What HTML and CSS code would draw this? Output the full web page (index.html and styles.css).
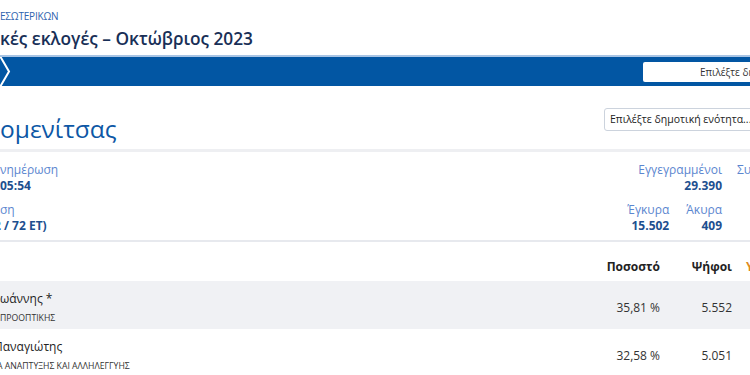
FILE: index.html
```html
<!DOCTYPE html>
<html lang="el">
<head>
<meta charset="utf-8">
<title>Εκλογές</title>
<link rel="stylesheet" href="styles.css">
</head>
<body>
<div class="page">
  <header class="site-head">
    <div class="ministry">ΕΣΩΤΕΡΙΚΩΝ</div>
    <h1 class="title">κές εκλογές – Οκτώβριος 2023</h1>
  </header>
  <nav class="navbar">
    <svg class="chev" width="14" height="30" viewBox="0 0 14 30"><path d="M1 -1 L10 14.5 L1 30" fill="none" stroke="#fff" stroke-width="2"/></svg>
    <div class="nav-select">Επιλέξτε δήμο</div>
  </nav>
  <section class="muni">
    <h2 class="muni-name">ομενίτσας</h2>
    <div class="unit-select">Επιλέξτε δημοτική ενότητα...</div>
  </section>
  <section class="stats">
    <div class="stats-left">
      <div class="stat"><div class="lbl">νημέρωση</div><div class="val">05:54</div></div>
      <div class="stat"><div class="lbl">ση</div><div class="val"><span class="cut">2</span> / 72 ΕΤ)</div></div>
    </div>
    <div class="stats-right">
      <div class="srow">
        <div class="stat r"><div class="lbl">Εγγεγραμμένοι</div><div class="val">29.390</div></div>
        <div class="stat l"><div class="lbl">Συμμετοχή</div><div class="val">&nbsp;</div></div>
      </div>
      <div class="srow">
        <div class="stat r"><div class="lbl">Έγκυρα</div><div class="val">15.502</div></div>
        <div class="stat r"><div class="lbl">Άκυρα</div><div class="val">409</div></div>
        <div class="stat l"></div>
      </div>
    </div>
  </section>
  <section class="results">
    <div class="row head">
      <div></div>
      <div class="num">Ποσοστό</div>
      <div class="num">Ψήφοι</div>
      <div class="extra">Υποψήφιοι</div>
    </div>
    <div class="row alt">
      <div class="cand"><div class="name">ωάννης *</div><div class="party">ΠΡΟΟΠΤΙΚΗΣ</div></div>
      <div class="num reg">35,81 %</div>
      <div class="num reg">5.552</div>
      <div class="extra"></div>
    </div>
    <div class="row">
      <div class="cand"><div class="name"><span class="cut2">Π</span>αναγιώτης</div><div class="party"><span class="cut3">Α</span> ΑΝΑΠΤΥΞΗΣ ΚΑΙ ΑΛΛΗΛΕΓΓΥΗΣ</div></div>
      <div class="num reg">32,58 %</div>
      <div class="num reg">5.051</div>
      <div class="extra"></div>
    </div>
  </section>
</div>
</body>
</html>
```

FILE: styles.css
```css
html, body {
  margin: 0;
  padding: 0;
  overflow: hidden;
  background: #fff;
}
body {
  font-family: "Open Sans", "Noto Sans", sans-serif;
  color: #222;
}
.page {
  width: 820px;
}
.site-head {
  padding: 9px 0 0 0;
  height: 55px;
  box-sizing: border-box;
}
.ministry {
  font-size: 10px;
  line-height: 14px;
  color: #2f63ae;
  letter-spacing: -0.2px;
}
.title {
  margin: 4px 0 0 0;
  font-size: 17.3px;
  line-height: 24px;
  font-weight: 600;
  color: #182f57;
}
.navbar {
  height: 31px;
  border-top: 2px solid #a8c4e4;
  background: #0256a3;
  display: flex;
  align-items: center;
  box-sizing: border-box;
}
.chev {
  display: block;
  flex: none;
  margin-left: -1px;
}
.nav-select {
  margin-left: auto;
  width: 120px;
  height: 20px;
  background: #fff;
  border-radius: 2px;
  font-size: 10px;
  line-height: 20px;
  color: #333;
  padding-left: 57px;
  white-space: nowrap;
  overflow: hidden;
}
.muni {
  display: flex;
  align-items: flex-start;
  height: 66px;
  border-bottom: 3px solid #eeeff2;
  box-sizing: border-box;
}
.muni-name {
  margin: 27px 0 0 0;
  font-size: 24.5px;
  line-height: 32px;
  font-weight: 500;
  color: #0d57a5;
}
.unit-select {
  margin-left: auto;
  margin-right: 50px;
  margin-top: 22px;
  width: 166px;
  height: 23px;
  border: 1px solid #ccd3dd;
  border-radius: 3px;
  box-sizing: border-box;
  font-size: 10.5px;
  line-height: 21px;
  padding-left: 5px;
  color: #222;
  white-space: nowrap;
  overflow: hidden;
}
.stats {
  display: flex;
  justify-content: space-between;
  padding: 10px 0 6px 0;
  border-bottom: 2px solid #e7e9ee;
}
.stats-left, .stats-right {
  display: flex;
  flex-direction: column;
  gap: 8px;
}
.stat {
  font-size: 12px;
  line-height: 16px;
}
.lbl {
  color: #5b86cf;
}
.val {
  font-weight: 700;
  color: #1d4f8f;
}
.srow {
  display: flex;
  justify-content: flex-end;
  gap: 17px;
}
.stat.r {
  text-align: right;
}
.stat.l {
  width: 83px;
  margin-left: -2px;
}
.cut {
  display: inline-block;
  margin-left: -6px;
}
.results {
  padding-top: 16px;
}
.row {
  display: grid;
  grid-template-columns: 1fr 80px 72px 88px;
  align-items: center;
}
.row.head {
  height: 23px;
  align-items: start;
  font-size: 11.5px;
  font-weight: 700;
  color: #222;
}
.row.alt {
  background: #f0f1f4;
}
.row:not(.head) {
  height: 48px;
}
.num {
  text-align: right;
  font-size: 12px;
}
.num.reg {
  color: #333;
  padding-top: 4px;
}
.extra {
  padding-left: 14px;
  color: #e08a1e;
  font-size: 12px;
  font-weight: 700;
  white-space: nowrap;
  overflow: hidden;
}
.row:not(.head) .extra {
  color: transparent;
}
.cand {
  display: flex;
  flex-direction: column;
  gap: 5px;
  margin-top: 4px;
}
.name {
  font-size: 12px;
  line-height: 16px;
  color: #222;
}
.party {
  font-size: 8.7px;
  line-height: 12px;
  color: #333;
  white-space: nowrap;
}
.cut2 {
  display: inline-block;
  margin-left: -6px;
}
.cut3 {
  display: inline-block;
  margin-left: -3px;
}
```
